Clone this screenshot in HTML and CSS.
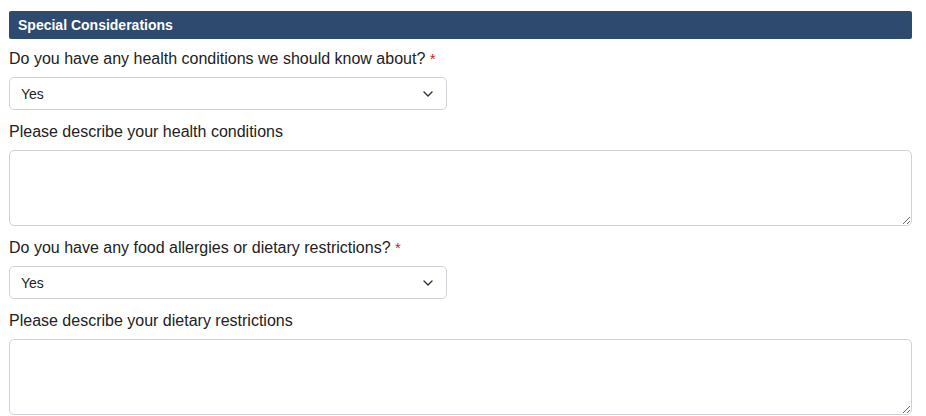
FILE: index.html
```html
<!DOCTYPE html>
<html>
<head>
<meta charset="utf-8">
<link rel="stylesheet" href="styles.css">
</head>
<body>
<div class="form">
  <div class="section-header">Special Considerations</div>
  <div class="group">
    <label class="label">Do you have any health conditions we should know about? <span class="req">*</span></label>
    <div class="select">
      <span>Yes</span>
      <svg class="chev" width="10" height="6" viewBox="0 0 10 6"><path d="M1 1l4 4 4-4" fill="none" stroke="#333" stroke-width="1.4" stroke-linecap="round" stroke-linejoin="round"/></svg>
    </div>
  </div>
  <div class="group">
    <label class="label">Please describe your health conditions</label>
    <textarea class="textarea"></textarea>
  </div>
  <div class="group">
    <label class="label">Do you have any food allergies or dietary restrictions? <span class="req">*</span></label>
    <div class="select">
      <span>Yes</span>
      <svg class="chev" width="10" height="6" viewBox="0 0 10 6"><path d="M1 1l4 4 4-4" fill="none" stroke="#333" stroke-width="1.4" stroke-linecap="round" stroke-linejoin="round"/></svg>
    </div>
  </div>
  <div class="group">
    <label class="label">Please describe your dietary restrictions</label>
    <textarea class="textarea"></textarea>
  </div>
</div>
</body>
</html>
```

FILE: styles.css
```css
html, body {
  margin: 0;
  padding: 0;
  background: #fff;
}
body {
  font-family: "Liberation Sans", Arial, sans-serif;
  color: #222;
  overflow: hidden;
}
.form {
  padding: 11px 14px 0 9px;
  display: flex;
  flex-direction: column;
}
.section-header {
  height: 28px;
  box-sizing: border-box;
  background: #2e4a6e;
  color: #fff;
  font-weight: bold;
  font-size: 14px;
  line-height: 28px;
  padding-left: 9px;
  border-radius: 2px;
  margin-bottom: 9px;
}
.group {
  display: flex;
  flex-direction: column;
  margin-bottom: 11px;
}
.label {
  display: block;
  height: 20px;
  font-size: 16px;
  line-height: 20px;
  margin-bottom: 9px;
  color: #222;
  padding-top: 1px;
  box-sizing: border-box;
}
.req {
  color: #d01c1c;
  font-size: 15px;
  line-height: 1;
}
.select {
  width: 438px;
  height: 33px;
  box-sizing: border-box;
  border: 1px solid #cfd2d6;
  border-radius: 5px;
  display: flex;
  align-items: center;
  justify-content: space-between;
  padding: 0 13px 0 11px;
  font-size: 14px;
  color: #222;
}
.chev {
  display: block;
}
.textarea {
  width: 100%;
  height: 76px;
  box-sizing: border-box;
  border: 1px solid #cfd2d6;
  border-radius: 5px;
  resize: vertical;
  font-family: inherit;
  margin: 0;
}
```
